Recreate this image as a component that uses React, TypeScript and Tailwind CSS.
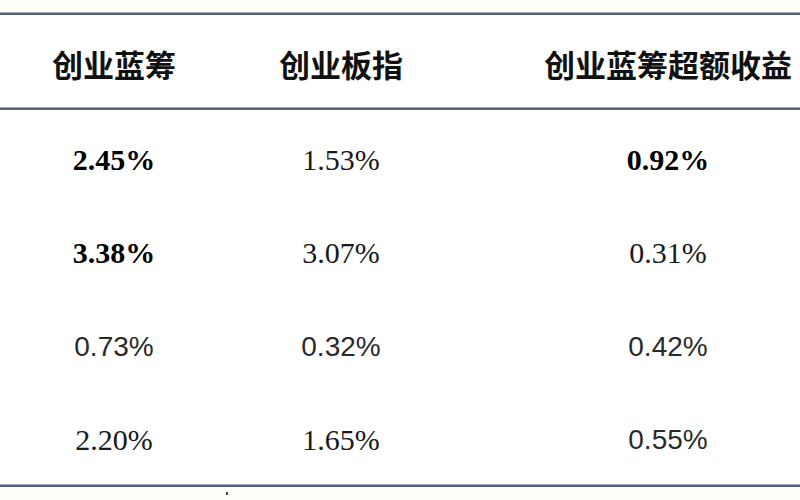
import React from "react";

type Cell = { v: string; bold?: boolean; sans?: boolean };

const rows: Cell[][] = [
  [{ v: "2.45%", bold: true }, { v: "1.53%" }, { v: "0.92%", bold: true }],
  [{ v: "3.38%", bold: true }, { v: "3.07%" }, { v: "0.31%" }],
  [{ v: "0.73%", sans: true }, { v: "0.32%", sans: true }, { v: "0.42%", sans: true }],
  [{ v: "2.20%" }, { v: "1.65%" }, { v: "0.55%", sans: true }],
];

function Line() {
  return (
    <div className="flex flex-col">
      <div className="h-px bg-[#a4a8bd]" />
      <div className="h-[2px] bg-[#5a6180]" />
    </div>
  );
}

function NumCell({ c, extra }: { c: Cell; extra?: string }) {
  const font = c.sans
    ? "font-['Liberation_Sans',sans-serif] text-[28px] text-[#2a2a2a]"
    : "font-['Liberation_Serif',serif] text-[30px] text-[#1a1a1a]";
  return (
    <div className={`flex items-center justify-center pt-[6px] ${extra ?? ""}`}>
      <span className={`${font} ${c.bold ? "font-bold text-black" : "font-normal"} leading-none`}>{c.v}</span>
    </div>
  );
}

export default function App() {
  const grid = "grid grid-cols-[228px_226px_1fr]";
  const head = "font-['Noto_Sans_CJK_SC',sans-serif] font-bold text-[31px] text-[#111] leading-none";
  return (
    <div className="w-[800px] h-[500px] bg-[#fffef8] flex flex-col overflow-hidden">
      <div className="h-[12px]" />
      <Line />
      <div className={`${grid} h-[92px] bg-white`}>
        <div className="flex items-center justify-center pt-[4px]">
          <span className={head}>创业蓝筹</span>
        </div>
        <div className="flex items-center justify-center pt-[4px]">
          <span className={head}>创业板指</span>
        </div>
        <div className="flex items-center justify-center pt-[4px] pl-[82px]">
          <span className={head}>创业蓝筹超额收益</span>
        </div>
      </div>
      <Line />
      <div className="flex flex-col bg-white h-[374px]">
        {rows.map((r, i) => (
          <div key={i} className={`${grid} flex-1`}>
            <NumCell c={r[0]} />
            <NumCell c={r[1]} />
            <NumCell c={r[2]} extra="pl-[82px]" />
          </div>
        ))}
      </div>
      <Line />
      <div className="flex-1 relative">
        <div className="absolute left-[226px] top-[5px] w-[2px] h-[3px] bg-[#444]" />
      </div>
    </div>
  );
}
